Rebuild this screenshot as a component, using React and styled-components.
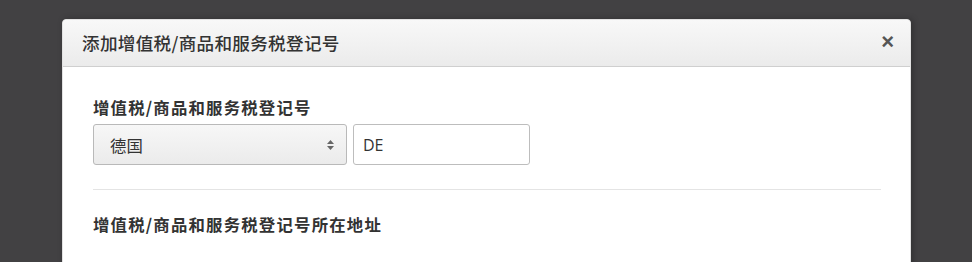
import React from "react";
import styled, { createGlobalStyle } from "styled-components";

const Global = createGlobalStyle`
  html, body { margin: 0; padding: 0; background: #424143; }
  body { font-family: "Noto Sans CJK SC", "Noto Sans", sans-serif; overflow: hidden; }
`;

const Page = styled.div`
  height: 262px;
  padding: 19px 0 0 62px;
  box-sizing: border-box;
  overflow: hidden;
`;

const Dialog = styled.div`
  width: 849px;
  height: 400px;
  background: #fff;
  border-radius: 4px 4px 0 0;
  border: 1px solid #e2e2e2;
  box-sizing: border-box;
  box-shadow: 2px 0 6px rgba(0,0,0,0.25);
`;

const Header = styled.div`
  height: 47px;
  display: flex;
  align-items: center;
  justify-content: space-between;
  padding: 0 16px 0 19px;
  background: linear-gradient(#f8f8f8, #ebebeb);
  border-bottom: 1px solid #cfcfcf;
  border-radius: 4px 4px 0 0;
  box-sizing: border-box;
`;

const Title = styled.h3`
  margin: 0;
  font-size: 17.6px;
  font-weight: 500;
  color: #333;
  letter-spacing: 0.3px;
  transform: translateY(-1px);
`;

const Close = styled.span`
  font-family: "Liberation Sans", sans-serif;
  font-size: 22px;
  font-weight: 700;
  color: #555;
  line-height: 1;
  transform: translateY(-1px);
`;

const Body = styled.div`
  padding: 28px 29px 0 30px;
`;

const Label = styled.div`
  font-size: 16.4px;
  font-weight: 700;
  color: #333;
  line-height: 24px;
  letter-spacing: 1.2px;
  margin-bottom: ${p => p.$mb || 0}px;
`;

const Row = styled.div`
  display: flex;
  gap: 6px;
`;

const Select = styled.div`
  width: 254px;
  height: 41px;
  box-sizing: border-box;
  border: 1px solid #b9b9b9;
  border-radius: 3px;
  background: linear-gradient(#f7f7f7, #ebebeb);
  display: flex;
  align-items: center;
  justify-content: space-between;
  padding: 0 12px 0 16px;
  font-size: 16.4px;
  color: #333;
`;

const Arrows = styled.svg`
  width: 7px;
  height: 10px;
  display: block;
`;

const Input = styled.div`
  width: 177px;
  height: 41px;
  box-sizing: border-box;
  border: 1px solid #bdbdbd;
  border-radius: 3px;
  background: #fff;
  display: flex;
  align-items: center;
  padding-left: 9px;
  font-family: "Open Sans", "Liberation Sans", sans-serif;
  font-size: 16px;
  color: #333;
`;

const Divider = styled.hr`
  border: 0;
  border-top: 1px solid #e4e4e4;
  margin: 24px 0 22px;
`;

export default function App() {
  return (
    <>
      <Global />
      <Page>
        <Dialog>
          <Header>
            <Title>添加增值税/商品和服务税登记号</Title>
            <Close>×</Close>
          </Header>
          <Body>
            <Label $mb={5}>增值税/商品和服务税登记号</Label>
            <Row>
              <Select>
                <span>德国</span>
                <Arrows viewBox="0 0 7 10">
                  <path d="M3.5 0 L7 4 H0 Z M0 6 H7 L3.5 10 Z" fill="#666" />
                </Arrows>
              </Select>
              <Input>DE</Input>
            </Row>
            <Divider />
            <Label>增值税/商品和服务税登记号所在地址</Label>
          </Body>
        </Dialog>
      </Page>
    </>
  );
}
